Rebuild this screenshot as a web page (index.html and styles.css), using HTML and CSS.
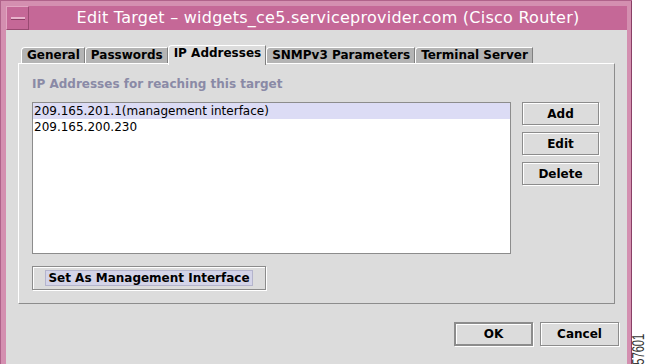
FILE: index.html
```html
<!DOCTYPE html>
<html>
<head>
  <title>Edit Target</title>
  <link rel="stylesheet" href="styles.css">
</head>
<body>

<div class="window">
  <div class="titlebar">
    <div class="menu-btn"><span class="menu-bar"></span></div>
    <div class="title">Edit Target – widgets_ce5.serviceprovider.com (Cisco Router)</div>
  </div>

  <div class="content">
    <div class="tabs">
      <div class="tab">General</div>
      <div class="tab">Passwords</div>
      <div class="tab active">IP Addresses</div>
      <div class="tab">SNMPv3 Parameters</div>
      <div class="tab">Terminal Server</div>
    </div>

    <div class="panel">
      <div class="caption">IP Addresses for reaching this target</div>
      <div class="list-row">
        <ul class="list">
          <li class="selected">209.165.201.1(management interface)</li>
          <li>209.165.200.230</li>
        </ul>
        <div class="side-buttons">
          <button class="btn">Add</button>
          <button class="btn">Edit</button>
          <button class="btn">Delete</button>
        </div>
      </div>
      <button class="btn wide"><span class="focus">Set As Management Interface</span></button>
    </div>

    <div class="footer">
      <button class="btn default">OK</button>
      <button class="btn">Cancel</button>
    </div>
  </div>
</div>

<div class="figure-id">57601</div>

</body>
</html>
```

FILE: styles.css
```css
body {
  margin: 0;
  background: #ffffff;
  display: flex;
  align-items: flex-end;
  height: 364px;
  overflow: hidden;
  font-family: "DejaVu Sans", sans-serif;
}

.window {
  width: 621px;
  height: 358px;
  padding: 6px 5px 0 6px;
  background: #d48fb0;
  box-shadow: inset 1px 1px 0 #b0628a, inset -1px 0 0 #8a3f66;
  display: flex;
  flex-direction: column;
  align-self: flex-start;
}

.titlebar {
  height: 24px;
  display: flex;
  background: #c56897;
}

.menu-btn {
  width: 21px;
  height: 22px;
  border-top: 1px solid #e2a6c2;
  border-left: 1px solid #e2a6c2;
  border-right: 1px solid #9a4a72;
  border-bottom: 1px solid #9a4a72;
  display: flex;
  align-items: center;
  justify-content: center;
}

.menu-bar {
  width: 14px;
  height: 2px;
  background: #e8b2cc;
  border-bottom: 1px solid #8d3f66;
}

.title {
  flex: 1;
  text-align: center;
  color: #ffffff;
  font-size: 16px;
  letter-spacing: 0.25px;
  line-height: 24px;
  white-space: nowrap;
}

.content {
  flex: 1;
  background: #dcdcdc;
  display: flex;
  flex-direction: column;
  padding: 0 8px 12px 12px;
}

.tabs {
  display: flex;
  margin-top: 17px;
  margin-left: 3px;
  height: 16px;
}

.tab {
  font-weight: bold;
  font-size: 12px;
  line-height: 15px;
  color: #000000;
  background: #b4b4b4;
  padding: 0 4px 0 5px;
  border-top: 1px solid #ffffff;
  border-left: 1px solid #ffffff;
  border-right: 1px solid #808080;
  border-top-left-radius: 4px 4px;
  white-space: nowrap;
}

.tab.active {
  background: #dcdcdc;
  margin-top: -2px;
  height: 19px;
  position: relative;
  z-index: 1;
}

.panel {
  border-top: 1px solid #ffffff;
  border-left: 1px solid #ffffff;
  border-right: 1px solid #8c8c8c;
  border-bottom: 1px solid #8c8c8c;
  height: 239px;
  margin-right: 4px;
  padding: 0 14px 0 13px;
  display: flex;
  flex-direction: column;
}

.caption {
  color: #8a8aa6;
  font-weight: bold;
  font-size: 12px;
  margin-top: 13px;
  height: 25px;
}

.list-row {
  display: flex;
  gap: 11px;
}

.list {
  list-style: none;
  margin: 0;
  padding: 0;
  width: 477px;
  height: 150px;
  background: #ffffff;
  border: 1px solid #8c8c8c;
}

.list li {
  font-size: 12px;
  line-height: 16px;
  padding-left: 1px;
  height: 16px;
}

.list li.selected {
  background: #dcdcf5;
}

.side-buttons {
  display: flex;
  flex-direction: column;
  gap: 7px;
}

.btn {
  font-family: "DejaVu Sans", sans-serif;
  font-weight: bold;
  font-size: 12px;
  color: #000000;
  background: #dcdcdc;
  border: 1px solid #8c8c8c;
  box-shadow: inset 1px 1px 0 #ffffff, 1px 1px 0 #ffffff;
  width: 77px;
  height: 23px;
  padding: 0;
}

.btn.wide {
  width: 234px;
  height: 24px;
  margin-top: 12px;
}

.focus {
  background: #d4d4e8;
  border: 1px solid #b4b4cc;
  padding: 0 2px;
}

.footer {
  display: flex;
  justify-content: flex-end;
  gap: 7px;
  margin-top: 18px;
}

.footer .btn {
  width: 79px;
  height: 24px;
}

.btn.default {
  border: 2px solid #8c8c8c;
}

.figure-id {
  writing-mode: vertical-rl;
  transform: rotate(180deg) scaleY(0.7);
  font-family: "Liberation Sans", sans-serif;
  font-size: 16px;
  color: #333333;
  margin-left: 0;
  margin-bottom: -7px;
  line-height: 13px;
}
```
